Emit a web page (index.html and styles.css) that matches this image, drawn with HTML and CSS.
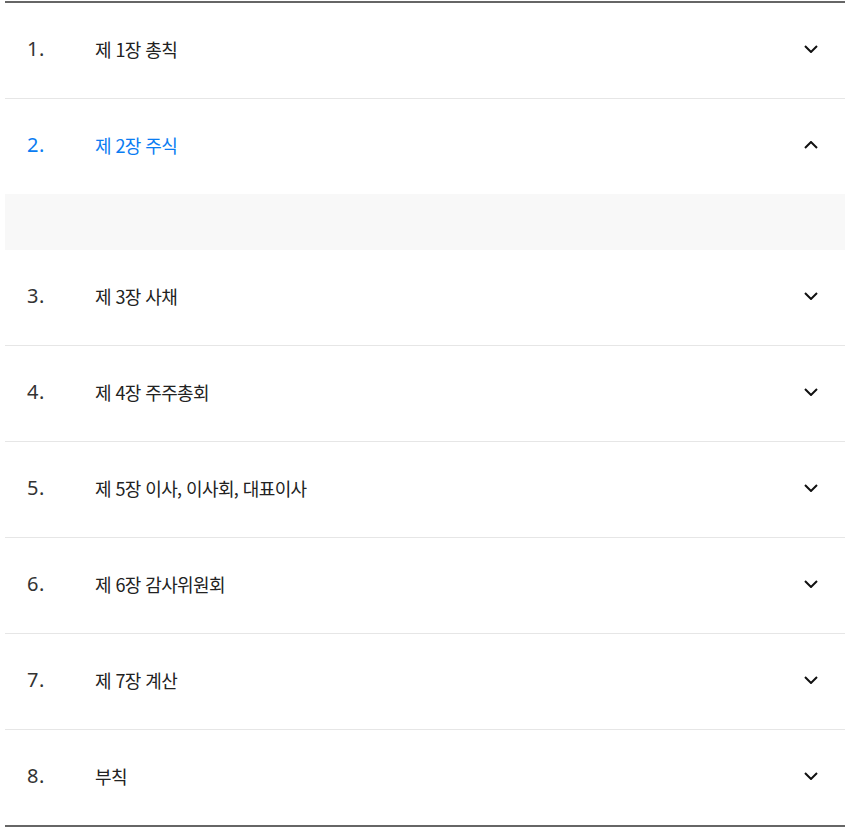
FILE: index.html
```html
<!DOCTYPE html>
<html lang="ko">
<head>
  <meta charset="UTF-8">
  <title>정관</title>
  <meta name="viewport" content="width=device-width, initial-scale=1.0">
  <link rel="stylesheet" href="styles.css">
</head>
<body>
  <div class="accordion">
    <div class="item">
      <div class="head"><span class="num">1.</span><span class="title">제 1장 총칙</span>
        <svg class="chev" viewBox="0 0 14 8"><path d="M1 1l6 6 6-6"/></svg></div>
    </div>
    <div class="item open">
      <div class="head"><span class="num">2.</span><span class="title">제 2장 주식</span>
        <svg class="chev" viewBox="0 0 14 8"><path d="M1 7l6-6 6 6"/></svg></div>
      <div class="panel"></div>
    </div>
    <div class="item">
      <div class="head"><span class="num">3.</span><span class="title">제 3장 사채</span>
        <svg class="chev" viewBox="0 0 14 8"><path d="M1 1l6 6 6-6"/></svg></div>
    </div>
    <div class="item">
      <div class="head"><span class="num">4.</span><span class="title">제 4장 주주총회</span>
        <svg class="chev" viewBox="0 0 14 8"><path d="M1 1l6 6 6-6"/></svg></div>
    </div>
    <div class="item">
      <div class="head"><span class="num">5.</span><span class="title">제 5장 이사, 이사회, 대표이사</span>
        <svg class="chev" viewBox="0 0 14 8"><path d="M1 1l6 6 6-6"/></svg></div>
    </div>
    <div class="item">
      <div class="head"><span class="num">6.</span><span class="title">제 6장 감사위원회</span>
        <svg class="chev" viewBox="0 0 14 8"><path d="M1 1l6 6 6-6"/></svg></div>
    </div>
    <div class="item">
      <div class="head"><span class="num">7.</span><span class="title">제 7장 계산</span>
        <svg class="chev" viewBox="0 0 14 8"><path d="M1 1l6 6 6-6"/></svg></div>
    </div>
    <div class="item">
      <div class="head"><span class="num">8.</span><span class="title">부칙</span>
        <svg class="chev" viewBox="0 0 14 8"><path d="M1 1l6 6 6-6"/></svg></div>
    </div>
  </div>
</body>
</html>
```

FILE: styles.css
```css
body {
  margin: 0;
  padding: 0;
  background: #fff;
  font-family: "Noto Sans CJK KR", "Noto Sans", sans-serif;
}
.accordion {
  width: 840px;
  margin: 1px 0 0 5px;
  border-top: 2px solid #666;
  border-bottom: 2px solid #666;
}
.item {
  border-bottom: 1px solid #e6e6e6;
}
.item:last-child {
  border-bottom: none;
}
.item.open {
  border-bottom-color: #f8f8f8;
}
.head {
  box-sizing: border-box;
  height: 95px;
  display: flex;
  align-items: center;
  padding: 0 27px 4px 22px;
  color: #222;
}
.num {
  width: 68px;
  font-family: "Noto Sans", sans-serif;
  font-size: 20px;
  letter-spacing: 0.5px;
  color: #333;
}
.title {
  flex: 1;
  font-size: 18px;
  letter-spacing: -0.6px;
}
.chev {
  width: 14px;
  height: 8px;
  fill: none;
  stroke: #111;
  stroke-width: 2;
}
.open .num,
.open .title {
  color: #0a7cf2;
}
.panel {
  height: 55px;
  background: #f8f8f8;
}
```
